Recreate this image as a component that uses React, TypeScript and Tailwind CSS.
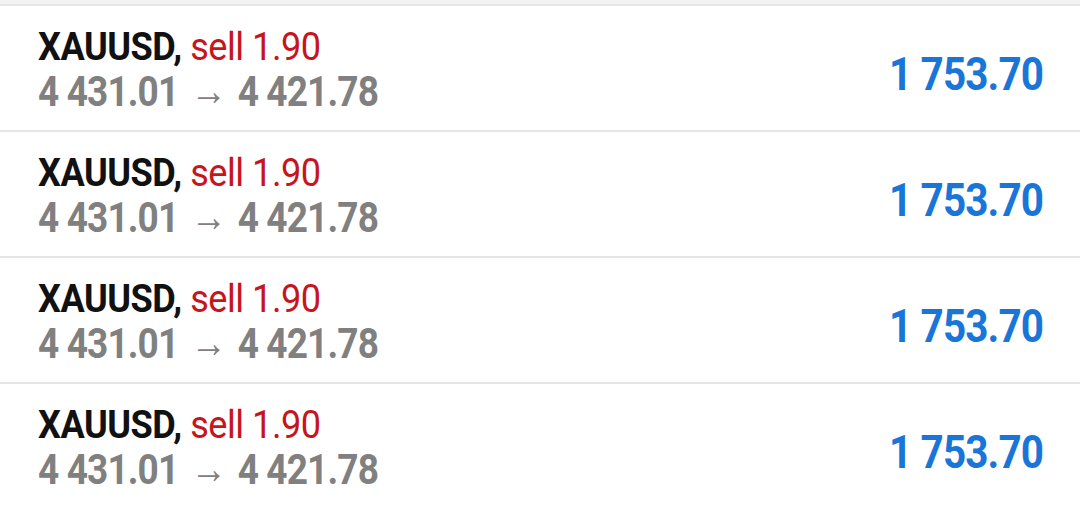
import React from "react";

const rows = [0, 1, 2, 3];

export default function App() {
  return (
    <div className="w-[1080px] h-[508px] bg-white overflow-hidden font-['Roboto',sans-serif]">
      <div className="h-[4px] bg-[#f2f2f2]" />
      <div className="h-[2px] bg-[#e6e6e6]" />
      {rows.map((i) => (
        <div key={i}>
          <div className="h-[124px] flex items-start justify-between pl-[38px] pr-[37px]">
            <div className="flex flex-col pt-[20px]">
              <div className="text-[38px] leading-[42px] tracking-[-0.5px] origin-left scale-x-[0.95] whitespace-nowrap">
                <span className="font-bold text-[#111]">XAUUSD,</span>{" "}
                <span className="text-[#c8141c]">sell 1.90</span>
              </div>
              <div className="flex items-center text-[43px] leading-[46px] font-bold text-[#808080] tracking-[-1px] origin-left scale-x-[0.86] whitespace-nowrap">
                <span>4 431.01</span>
                <span className="font-normal text-[42px] leading-[46px] mx-[14px]">→</span>
                <span>4 421.78</span>
              </div>
            </div>
            <div className="pt-[40px] text-[47px] leading-[56px] font-bold text-[#1976d8] tracking-[-1px] origin-right scale-x-[0.86] whitespace-nowrap">
              1 753.70
            </div>
          </div>
          <div className="h-[2px] bg-[#e6e6e6]" />
        </div>
      ))}
    </div>
  );
}
